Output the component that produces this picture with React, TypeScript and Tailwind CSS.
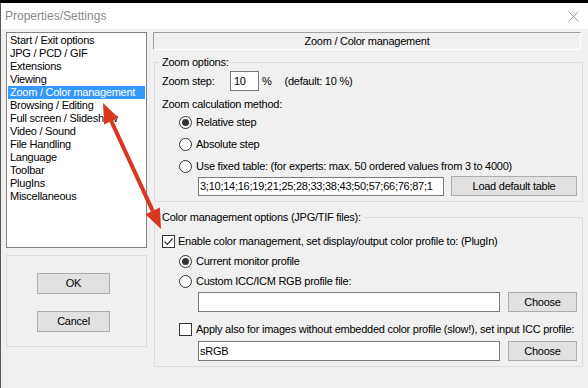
import type { ReactNode } from "react";

const items = [
  "Start / Exit options",
  "JPG / PCD / GIF",
  "Extensions",
  "Viewing",
  "Zoom / Color management",
  "Browsing / Editing",
  "Full screen / Slideshow",
  "Video / Sound",
  "File Handling",
  "Language",
  "Toolbar",
  "PlugIns",
  "Miscellaneous",
];

function Radio({ on, children }: { on?: boolean; children: ReactNode }) {
  return (
    <div className="flex items-center">
      <span className="ml-[24px] flex h-[13px] w-[13px] items-center justify-center rounded-full border border-[#333] bg-white">
        {on && <span className="h-[7px] w-[7px] rounded-full bg-[#333]" />}
      </span>
      <span className="ml-[4px] whitespace-nowrap">{children}</span>
    </div>
  );
}

function Check({ on }: { on?: boolean }) {
  return (
    <span className="flex h-[13px] w-[13px] shrink-0 items-center justify-center border border-[#333] bg-white">
      {on && (
        <svg width="11" height="11" viewBox="0 0 11 11">
          <path d="M1.5 5.5 L4.3 8.3 L9.5 2.5" fill="none" stroke="#333" strokeWidth="1.2" />
        </svg>
      )}
    </span>
  );
}

function Btn({ children, className }: { children: ReactNode; className: string }) {
  return (
    <div className={`flex items-center justify-center border border-[#adadad] bg-[#e1e1e1] ${className}`}>
      {children}
    </div>
  );
}

export default function App() {
  return (
    <div
      className="relative h-[388px] w-[588px] overflow-hidden bg-black pt-[3px] text-[11px] leading-[13px] tracking-[-0.25px] text-black"
      style={{ fontFamily: '"Liberation Sans", Arial, sans-serif' }}
    >
      <div className="h-[385px] border-l border-[#555] bg-[#f0f0f0]">
        {/* title bar */}
        <div className="flex h-[26px] items-center justify-between bg-white pl-[4px] pr-[9px]">
          <span className="text-[12px] tracking-normal text-[#8a8a8a]">Properties/Settings</span>
          <svg width="11" height="11" viewBox="0 0 11 11">
            <path d="M0.5 0.5 L10.5 10.5 M10.5 0.5 L0.5 10.5" stroke="#999" strokeWidth="1" />
          </svg>
        </div>

        <div className="flex pt-[3px]">
          {/* left column */}
          <div className="ml-[5px] w-[141px]">
            <div className="h-[216px] border border-[#828282] bg-white pt-[1px]">
              {items.map((it, i) => (
                <div
                  key={it}
                  className={`mx-[1px] h-[13px] whitespace-nowrap pl-[2px] ${i === 4 ? "bg-[#3399ff] text-white" : ""}`}
                >
                  {it}
                </div>
              ))}
            </div>
            <div className="mt-[7px] h-[92px] border border-[#dcdcdc] pt-[17px]">
              <Btn className="ml-[30px] h-[21px] w-[73px]">OK</Btn>
              <Btn className="ml-[30px] mt-[17px] h-[21px] w-[73px]">Cancel</Btn>
            </div>
          </div>

          {/* right column */}
          <div className="ml-[6px] w-[431px]">
            <div className="flex h-[18px] w-[428px] items-center justify-center border-b border-l border-r border-t border-b-white border-l-[#a0a0a0] border-r-white border-t-[#a0a0a0]">
              Zoom / Color management
            </div>

            <fieldset className="ml-[1px] mt-[6px] w-[429px] border border-[#dcdcdc] px-0 pb-[5px]">
              <legend className="ml-[5px] px-[2px] leading-[13px]">Zoom options:</legend>
              <div className="mt-[2px] flex h-[20px] items-center">
                <span className="ml-[7px] w-[68px]">Zoom step:</span>
                <div className="flex h-[20px] w-[29px] items-center border border-[#7a7a7a] bg-white pl-[3px]">10</div>
                <span className="ml-[3px]">%</span>
                <span className="ml-[13px]">(default: 10 %)</span>
              </div>
              <div className="ml-[7px] mt-[7px] h-[13px]">Zoom calculation method:</div>
              <div className="flex h-[22px] items-center">
                <Radio on>Relative step</Radio>
              </div>
              <div className="flex h-[22px] items-center">
                <Radio>Absolute step</Radio>
              </div>
              <div className="flex h-[22px] items-center">
                <Radio>Use fixed table: (for experts: max. 50 ordered values from 3 to 4000)</Radio>
              </div>
              <div className="mt-[-1px] flex h-[20px] items-center">
                <div className="ml-[43px] flex h-[19px] w-[246px] items-center overflow-hidden whitespace-nowrap border border-[#7a7a7a] bg-white pl-[1px]">
                  3;10;14;16;19;21;25;28;33;38;43;50;57;66;76;87;1
                </div>
                <Btn className="ml-[7px] h-[20px] w-[126px]">Load default table</Btn>
              </div>
            </fieldset>

            <fieldset className="ml-[1px] mt-[9px] w-[429px] border border-[#dcdcdc] px-0 pb-[5px]">
              <legend className="ml-[5px] px-[2px] leading-[13px]">Color management options (JPG/TIF files):</legend>
              <div className="mt-[10px] flex h-[14px] items-center pl-[7px]">
                <Check on />
                <span className="ml-[3px] whitespace-nowrap">
                  Enable color management, set display/output color profile to: (PlugIn)
                </span>
              </div>
              <div className="mt-[3px] flex h-[20px] items-center">
                <Radio on>Current monitor profile</Radio>
              </div>
              <div className="flex h-[21px] items-center">
                <Radio>Custom ICC/ICM RGB profile file:</Radio>
              </div>
              <div className="flex h-[20px] items-center">
                <div className="ml-[43px] h-[20px] w-[302px] border border-[#7a7a7a] bg-white" />
                <Btn className="ml-[8px] h-[20px] w-[69px]">Choose</Btn>
              </div>
              <div className="mt-[10px] flex h-[14px] items-center pl-[24px]">
                <Check />
                <span className="ml-[4px] whitespace-nowrap">
                  Apply also for images without embedded color profile (slow!), set input ICC profile:
                </span>
              </div>
              <div className="mt-[5px] flex h-[20px] items-center">
                <div className="ml-[43px] flex h-[20px] w-[302px] items-center border border-[#7a7a7a] bg-white pl-[1px]">
                  sRGB
                </div>
                <Btn className="ml-[8px] h-[20px] w-[69px]">Choose</Btn>
              </div>
            </fieldset>
          </div>
        </div>
      </div>

      {/* red annotation arrow */}
      <svg className="pointer-events-none absolute left-0 top-0" width="588" height="388" viewBox="0 0 588 388">
        <line x1="111.3" y1="121.1" x2="152.7" y2="210.9" stroke="#d9381e" strokeWidth="4" />
        <polygon points="103,103 104.1,124.4 118.6,117.8" fill="#d9381e" />
        <polygon points="161,229 145.5,214.2 159.9,207.6" fill="#d9381e" />
      </svg>
    </div>
  );
}
